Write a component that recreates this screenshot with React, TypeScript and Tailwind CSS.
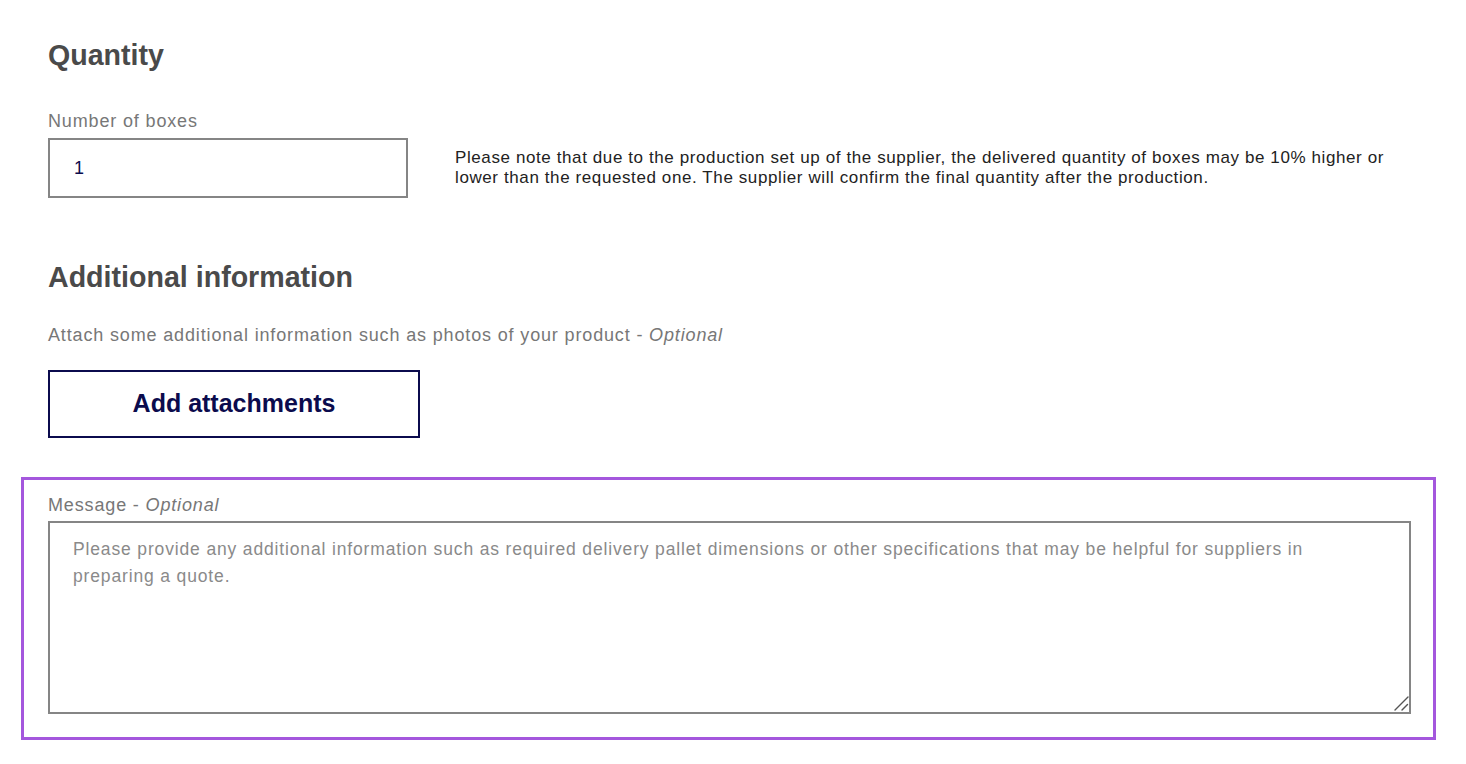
import { useState } from "react";

const FONT = "font-['Liberation_Sans','Helvetica_Neue',Arial,sans-serif]";

export default function App() {
  const [boxes, setBoxes] = useState("1");
  const [message, setMessage] = useState("");

  return (
    <div className={`min-h-screen bg-white pl-[21px] pr-[30px] pt-[37px] ${FONT}`}>
      <section className="px-[27px]">
        <h2 className="text-[28.6px] font-bold leading-[36px] text-[#4a4a4a]">Quantity</h2>

        <label
          htmlFor="boxes"
          className="mt-[36px] block text-[18px] leading-[24px] tracking-[0.85px] text-[#777]"
        >
          Number of boxes
        </label>
        <div className="mt-[5px] flex items-center">
          <input
            id="boxes"
            value={boxes}
            onChange={(e) => setBoxes(e.target.value)}
            className="h-[60px] w-[360px] shrink-0 border-2 border-[#858585] px-[24px] text-[18px] text-[#0b0b4d] outline-none"
          />
          <p className="ml-[47px] max-w-[950px] text-[17px] leading-[20px] tracking-[0.6px] text-[#222]">
            Please note that due to the production set up of the supplier, the delivered quantity of boxes may be 10%
            higher or lower than the requested one. The supplier will confirm the final quantity after the production.
          </p>
        </div>

        <h2 className="mt-[61px] text-[28.6px] font-bold leading-[36px] text-[#4a4a4a]">Additional information</h2>
        <p className="mt-[28px] text-[18px] leading-[24px] tracking-[0.85px] text-[#777]">
          Attach some additional information such as photos of your product - <em>Optional</em>
        </p>
        <button
          type="button"
          className="mt-[23px] h-[68px] w-[372px] border-2 border-[#0b0b4d] bg-white text-[25px] font-bold text-[#0b0b4d]"
        >
          Add attachments
        </button>
      </section>

      <section className="mt-[39px] border-[3px] border-[#a457dd] pb-[23px] pl-[24px] pr-[22px] pt-[13px]">
        <label htmlFor="message" className="block text-[18px] leading-[24px] tracking-[0.85px] text-[#777]">
          Message - <em>Optional</em>
        </label>
        <div className="relative mt-[4px]">
          <textarea
            id="message"
            value={message}
            onChange={(e) => setMessage(e.target.value)}
            placeholder="Please provide any additional information such as required delivery pallet dimensions or other specifications that may be helpful for suppliers in preparing a quote."
            className="block h-[193px] w-full resize-none border-2 border-[#858585] pl-[23px] pr-[34px] pt-[13px] text-[17.5px] leading-[27px] tracking-[0.85px] text-[#333] outline-none placeholder:text-[#8a8a8a]"
          />
          {/* resize grip */}
          <svg
            className="pointer-events-none absolute bottom-[2px] right-[2px] h-[16px] w-[16px]"
            viewBox="0 0 16 16"
            fill="none"
            stroke="#555"
            strokeWidth="1.4"
            strokeLinecap="round"
          >
            <path d="M2 14 L15 1" />
            <path d="M9 14 L14.5 8.5" />
          </svg>
        </div>
      </section>
    </div>
  );
}
